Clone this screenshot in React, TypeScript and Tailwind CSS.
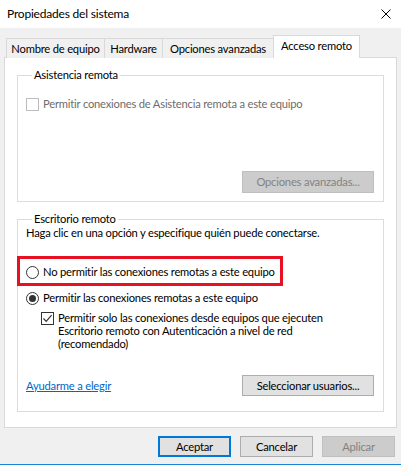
import React from 'react'

// ── Small win32-style controls ───────────────────────────────────────────────
function CheckBox({ checked, disabled }: { checked?: boolean; disabled?: boolean }) {
  return (
    <span
      className={
        'flex h-[13px] w-[13px] shrink-0 items-center justify-center border bg-white ' +
        (disabled ? 'border-[#bcbcbc]' : 'border-[#333333]')
      }
    >
      {checked && (
        <svg width="11" height="11" viewBox="0 0 11 11">
          <path d="M1.5 5.5 L4.2 8.3 L9.6 2.2" fill="none" stroke="#333" strokeWidth="1.2" />
        </svg>
      )}
    </span>
  )
}

function Radio({ checked }: { checked?: boolean }) {
  return (
    <span className="flex h-[13px] w-[13px] shrink-0 items-center justify-center rounded-full border border-[#333333] bg-white">
      {checked && <span className="h-[7px] w-[7px] rounded-full bg-[#333333]" />}
    </span>
  )
}

const TABS = [
  { label: 'Nombre de equipo', w: 'w-[99px] border-l' },
  { label: 'Hardware', w: 'w-[58px]' },
  { label: 'Opciones avanzadas', w: 'w-[111px]' },
]

export default function App() {
  return (
    <div className="flex h-[465px] w-[401px] flex-col overflow-hidden bg-[#f0f0f0] font-['Lato',sans-serif] text-[11.2px] leading-[16px] tracking-[-0.2px] text-black">
      {/* ── Title bar ──────────────────────────────────────────────────── */}
      <div className="flex h-[28px] shrink-0 items-center justify-between bg-white pl-[7px] pr-[10px]">
        <span className="text-[12px]">Propiedades del sistema</span>
        <svg width="10" height="10" viewBox="0 0 10 10">
          <path d="M0.5 0.5 L9.5 9.5 M9.5 0.5 L0.5 9.5" stroke="#000" strokeWidth="1" />
        </svg>
      </div>

      {/* ── Tabs ───────────────────────────────────────────────────────── */}
      <div className="relative z-10 -mb-px flex items-end pl-[6px] pt-[7px]">
        {TABS.map(t => (
          <div
            key={t.label}
            className={`flex h-[20px] items-center justify-center border-r border-t border-[#d9d9d9] bg-[#f0f0f0] ${t.w}`}
          >
            {t.label}
          </div>
        ))}
        <div className="-ml-px flex h-[23px] w-[87px] items-start justify-center border border-b-0 border-[#d9d9d9] bg-white pt-[2px]">
          Acceso remoto
        </div>
      </div>

      {/* ── Tab panel ──────────────────────────────────────────────────── */}
      <div className="mx-[4px] flex h-[371px] shrink-0 flex-col border border-[#d9d9d9] bg-white px-[12px] pt-[9px]">
        <fieldset className="border border-[#dcdcdc] pb-[8px] pl-[8px] pr-[9px]">
          <legend className="ml-[6px] px-[2px]">Asistencia remota</legend>
          <div className="mt-[13px] flex items-center gap-[4px] text-[#6d6d6d]">
            <CheckBox disabled />
            <span>Permitir conexiones de Asistencia remota a este equipo</span>
          </div>
          <div className="mt-[59px] flex justify-end">
            <div className="flex h-[22px] w-[132px] items-center justify-center border border-[#bfbfbf] bg-[#cccccc] text-[#838383]">
              Opciones avanzadas...
            </div>
          </div>
        </fieldset>

        <fieldset className="mt-[9px] border border-[#dcdcdc] pb-[15px] pl-[8px] pr-[9px]">
          <legend className="ml-[6px] px-[2px]">Escritorio remoto</legend>
          <div className="-mt-[2px]">Haga clic en una opción y especifique quién puede conectarse.</div>

          <div className="relative mt-[23px] flex items-center gap-[4px]">
            <Radio />
            <span>No permitir las conexiones remotas a este equipo</span>
            <span className="pointer-events-none absolute -left-[9px] -top-[8px] h-[30px] w-[266px] border-[3px] border-[#e81123]" />
          </div>

          <div className="mt-[10px] flex items-center gap-[4px]">
            <Radio checked />
            <span>Permitir las conexiones remotas a este equipo</span>
          </div>

          <div className="mt-[5px] flex items-start gap-[4px] pl-[15px] leading-[13px]">
            <span className="mt-[1px]">
              <CheckBox checked />
            </span>
            <span>
              Permitir solo las conexiones desde equipos que ejecuten
              <br />
              Escritorio remoto con Autenticación a nivel de red
              <br />
              (recomendado)
            </span>
          </div>

          <div className="mt-[25px] flex items-center justify-between">
            <span className="text-[#0066cc] underline">Ayudarme a elegir</span>
            <div className="flex h-[21px] w-[132px] items-center justify-center border border-[#adadad] bg-[#e1e1e1]">
              Seleccionar usuarios...
            </div>
          </div>
        </fieldset>
      </div>

      {/* ── Dialog buttons ─────────────────────────────────────────────── */}
      <div className="mt-[8px] flex justify-end gap-[9px] pr-[6px]">
        <div className="flex h-[21px] w-[73px] items-center justify-center border-2 border-[#0078d7] bg-[#e1e1e1]">
          Aceptar
        </div>
        <div className="flex h-[21px] w-[73px] items-center justify-center border border-[#adadad] bg-[#e1e1e1]">
          Cancelar
        </div>
        <div className="flex h-[21px] w-[73px] items-center justify-center border border-[#bfbfbf] bg-[#cccccc] text-[#838383]">
          Aplicar
        </div>
      </div>

      <div className="mt-auto h-px shrink-0 bg-[#1883d7]" />
    </div>
  )
}
